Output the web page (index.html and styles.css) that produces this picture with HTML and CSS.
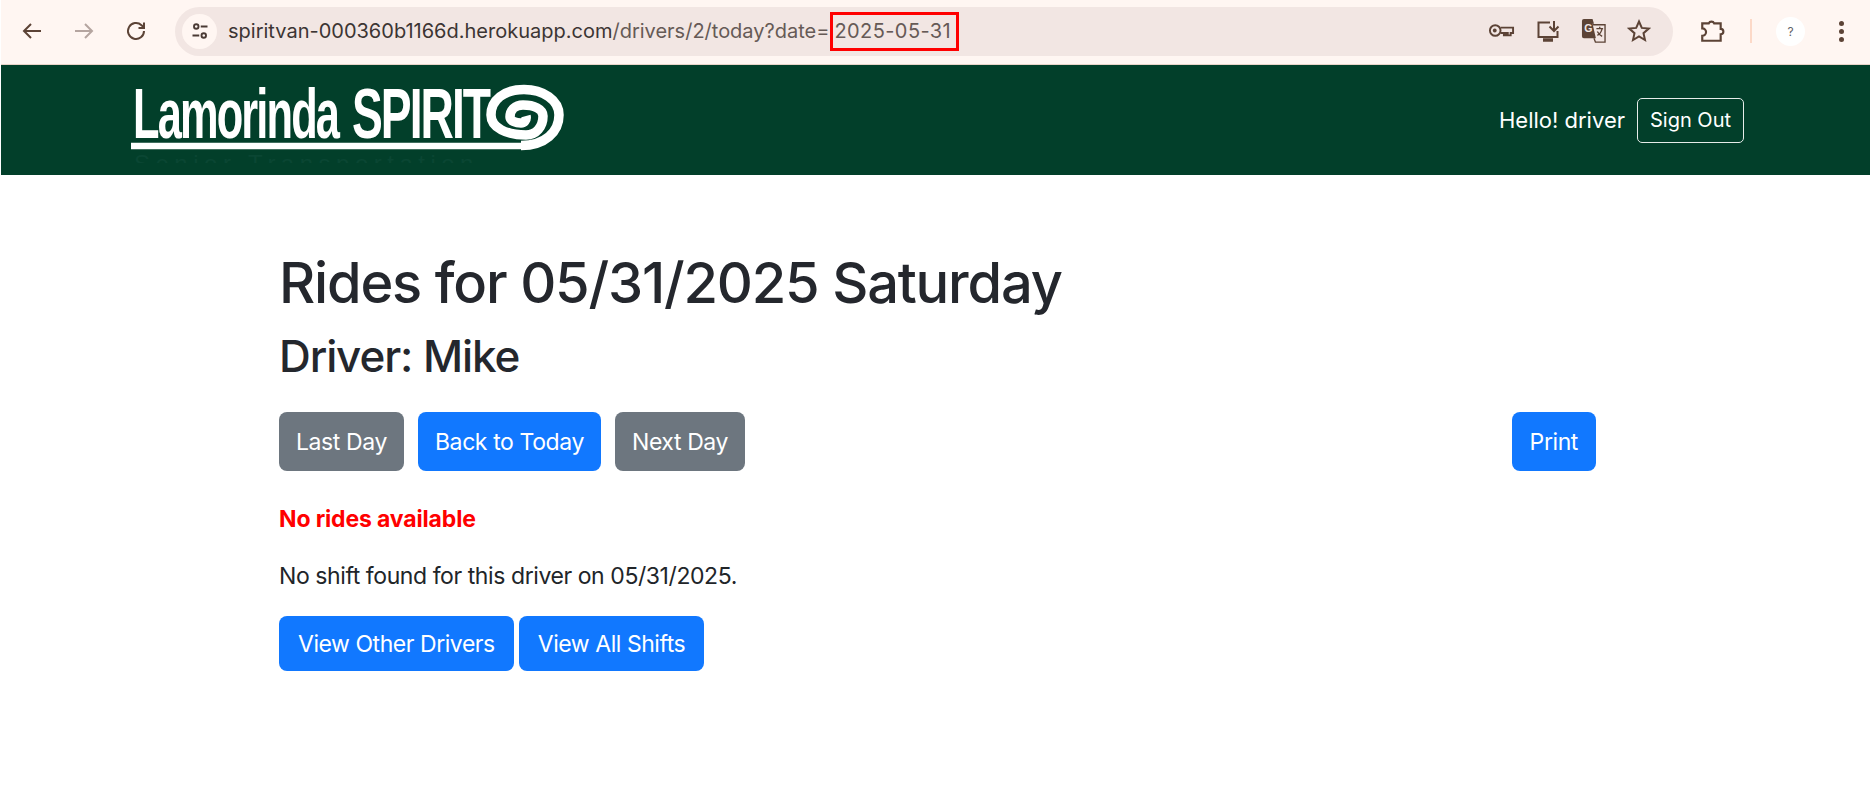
FILE: index.html
```html
<!DOCTYPE html>
<html lang="en">
<head>
    <meta charset="UTF-8">
    <meta name="viewport" content="width=device-width, initial-scale=1.0">
    <title>Rides for 05/31/2025</title>
    <link rel="stylesheet" href="styles.css">
</head>
<body>
    <div class="toolbar">
        <div class="nav-icons">
            <svg class="tool-icon" viewBox="0 0 24 24"><path d="M21 12H4M11 5 4 12l7 7"/></svg>
            <svg class="tool-icon faded" viewBox="0 0 24 24"><path d="M3 12h17M13 5l7 7-7 7"/></svg>
            <svg class="tool-icon" viewBox="0 0 24 24"><path d="M20 12a8 8 0 1 1-2.500-5.800L20 8.500M20 3.500v5.500h-5.500"/></svg>
        </div>
        <div class="omnibox">
            <div class="site-chip">
                <svg viewBox="0 0 24 24" class="chip-icon"><circle cx="7" cy="6" r="3"/><path d="M13 6h9M2 18h9"/><circle cx="17" cy="18" r="3"/></svg>
            </div>
            <div class="url">spiritvan-000360b1166d.herokuapp.com<span class="url-path">/drivers/2/today?date=</span><span class="url-mark">2025-05-31</span></div>
            <div class="omni-icons">
                <svg class="tool-icon key" viewBox="0 0 28 16"><path d="M13 4.500h13v5.500h-2.500v2.500h-3V10h-2v2.500h-2V10H13"/><circle cx="7.500" cy="7.500" r="5.500"/><circle class="solid" cx="7" cy="7.500" r="2"/></svg>
                <svg class="tool-icon" viewBox="0 0 24 24"><path d="M14 3.500H2.500V18h19v-6M18 2v10M13.500 7.500 18 12l4.500-4.500"/><path class="thick" d="M7 21h10"/></svg>
                <svg class="tool-icon translate" viewBox="0 0 26 26"><path class="solid" d="M1 2a2 2 0 0 1 2-2h9l1.500 5H12l3.500 15H3a2 2 0 0 1-2-2z"/><text class="icon-g" x="3.500" y="14">G</text><path class="thin" d="M12 6h13v18H15l-1.500-4"/><path class="thin" d="M16 10h7M19.500 8v2M22 10c-1 4-3 6-5 7M17 13c1 2 3 4 5 5"/></svg>
                <svg class="tool-icon" viewBox="0 0 24 24"><path d="m12 2.500 2.800 6.400 6.900.7-5.200 4.600 1.500 6.800-6-3.500-6 3.500 1.500-6.800-5.200-4.600 6.900-.7z"/></svg>
            </div>
        </div>
        <div class="toolbar-end">
            <svg class="tool-icon puzzle" viewBox="0 0 24 24"><path d="M3 5h6a2.700 2.700 0 0 1 5 0h6v5a2.500 2.500 0 0 1 0 5v6H3v-4.500a3.500 3.500 0 0 0 0-7z"/></svg>
            <div class="toolbar-sep"></div>
            <div class="avatar">?</div>
            <div class="dots"><span></span><span></span><span></span></div>
        </div>
    </div>

    <header class="site-header">
        <svg class="logo" viewBox="0 0 440 83">
            <text class="logo-text" transform="translate(2 58) scale(.62 1)">Lamorinda</text>
            <text class="logo-text" transform="translate(221 58) scale(.66 1)">SPIRIT</text>
            <path class="logo-bar" d="M0 66H392"/>
            <path class="logo-swirl" d="M390 65.500C414 65.500 428 52 428 35C428 20 412 9.500 393 9.500C373 9.500 360 20 360 35C360 48 376 55 395 55C405 55 412 47 412 36C412 29 403 25 392 25C384 25 379 30 379 37C379 41 385 43 390 43C393 43 396 40 395 36"/>
            <text class="logo-tagline" x="3" y="92">Senior Transportation</text>
        </svg>
        <div class="user-area">
            <span class="hello">Hello! driver</span>
            <a class="btn-outline" href="#">Sign Out</a>
        </div>
    </header>

    <main class="content">
        <h1>Rides for 05/31/2025 Saturday</h1>
        <h2>Driver: Mike</h2>
        <div class="day-nav">
            <a class="btn btn-gray" href="#">Last Day</a>
            <a class="btn btn-blue" href="#">Back to Today</a>
            <a class="btn btn-gray" href="#">Next Day</a>
            <a class="btn btn-blue btn-print" href="#">Print</a>
        </div>
        <p class="no-rides">No rides available</p>
        <p class="no-shift">No shift found for this driver on 05/31/2025.</p>
        <div class="shift-links">
            <a class="btn btn-blue btn-low" href="#">View Other Drivers</a>
            <a class="btn btn-blue btn-low" href="#">View All Shifts</a>
        </div>
    </main>
</body>
</html>
```

FILE: styles.css
```css
* {
    margin: 0;
    padding: 0;
    box-sizing: border-box;
}
body {
    background-color: #fff;
    font-family: Inter, "Liberation Sans", sans-serif;
    color: #212529;
    height: 796px;
    overflow: hidden;
}
a {
    text-decoration: none;
}

/* browser bar */
.toolbar {
    height: 65px;
    margin-left: 1px;
    background-color: #fff6f2;
    border-bottom: 1px solid #e8d3c8;
    display: flex;
    align-items: center;
    padding: 0 0 2px 19px;
}
.nav-icons {
    display: flex;
    gap: 28px;
    width: 155px;
}
.tool-icon {
    width: 24px;
    height: 24px;
    fill: none;
    stroke: #5c4336;
    stroke-width: 2;
    flex: none;
}
.tool-icon.faded {
    stroke: #b5a5a0;
}
.tool-icon .solid {
    fill: #5c4336;
    stroke: none;
}
.tool-icon .thick {
    stroke-width: 3.500;
}
.tool-icon .thin {
    stroke-width: 1.400;
}
.tool-icon.key {
    width: 27px;
    height: 16px;
}
.tool-icon.translate {
    width: 25px;
    height: 25px;
}
.icon-g {
    font-family: "Liberation Sans", sans-serif;
    font-size: 11px;
    font-weight: 700;
    fill: #f2e6e3;
    stroke: none;
}
.omnibox {
    width: 1498px;
    height: 49px;
    background-color: #f2e6e3;
    border-radius: 25px;
    display: flex;
    align-items: center;
    padding-left: 7px;
}
.site-chip {
    width: 35px;
    height: 35px;
    border-radius: 50%;
    background-color: #fff6f2;
    display: flex;
    align-items: center;
    justify-content: center;
}
.chip-icon {
    width: 18px;
    height: 18px;
    fill: none;
    stroke: #4a3a34;
    stroke-width: 2.500;
}
.url {
    margin-left: 11px;
    font-size: 20px;
    color: #3c3533;
    white-space: nowrap;
    display: flex;
    align-items: center;
}
.url-path {
    color: #665a56;
}
.url-mark {
    color: #665a56;
    border: 3px solid #f00;
    height: 39px;
    width: 129px;
    line-height: 33px;
    padding-left: 2px;
    letter-spacing: .4px;
}
.omni-icons {
    margin-left: auto;
    margin-right: 22px;
    display: flex;
    gap: 21px;
    align-items: center;
}
.toolbar-end {
    display: flex;
    align-items: center;
    margin-left: 26px;
}
.puzzle {
    width: 26px;
    height: 26px;
}
.toolbar-sep {
    width: 2px;
    height: 24px;
    background-color: #fcd9c8;
    margin-left: 25px;
}
.avatar {
    width: 29px;
    height: 29px;
    border-radius: 50%;
    background-color: #fff;
    color: #5f6368;
    font-size: 12px;
    line-height: 29px;
    text-align: center;
    margin-left: 24px;
}
.dots {
    display: flex;
    flex-direction: column;
    gap: 3px;
    margin-left: 34px;
}
.dots span {
    width: 5px;
    height: 5px;
    border-radius: 50%;
    background-color: #5c4336;
}

/* site header */
.site-header {
    height: 110px;
    margin-left: 1px;
    background-color: #023f2a;
    display: flex;
    align-items: center;
    justify-content: space-between;
    padding: 0 126px 0 130px;
}
.logo {
    width: 440px;
    height: 83px;
    margin-top: 3px;
}
.logo-text {
    font-family: "Liberation Sans", sans-serif;
    font-size: 70px;
    font-weight: 700;
    letter-spacing: -3px;
    fill: #fff;
}
.logo-bar {
    fill: none;
    stroke: #fff;
    stroke-width: 6.500;
}
.logo-swirl {
    fill: none;
    stroke: #fff;
    stroke-width: 9.500;
}
.logo-tagline {
    font-family: "Liberation Sans", sans-serif;
    font-size: 24px;
    letter-spacing: 5.500px;
    fill: #0a4633;
}
.user-area {
    display: flex;
    align-items: center;
    gap: 12px;
}
.hello {
    color: #fff;
    font-size: 22px;
}
.btn-outline {
    color: #fff;
    font-size: 20px;
    border: 1px solid #e6ece9;
    border-radius: 5px;
    height: 45px;
    width: 107px;
    display: flex;
    align-items: center;
    justify-content: center;
}

/* page content */
.content {
    width: 1317px;
    margin-left: 279px;
    padding-top: 75px;
}
h1 {
    font-size: 56px;
    font-weight: 500;
    line-height: 67px;
    letter-spacing: -1.2px;
    color: #24272d;
}
h2 {
    font-size: 44px;
    font-weight: 500;
    line-height: 53px;
    margin-top: 13px;
    letter-spacing: -1.1px;
    color: #24272d;
}
.day-nav {
    display: flex;
    gap: 14px;
    margin-top: 29px;
}
.btn {
    height: 59px;
    padding: 0 17px;
    border-radius: 8px;
    color: #fff;
    font-size: 23px;
    letter-spacing: -.4px;
    display: flex;
    align-items: center;
}
.btn-gray {
    background-color: #6d767f;
}
.btn-blue {
    background-color: #1178ff;
}
.btn-print {
    margin-left: auto;
    padding: 0 18px;
}
.btn-low {
    height: 55px;
    padding: 0 19px;
    letter-spacing: -.45px;
}
.no-rides {
    color: #f00;
    font-size: 23px;
    font-weight: 700;
    line-height: 34px;
    margin-top: 31px;
    letter-spacing: -.15px;
}
.no-shift {
    font-size: 23px;
    line-height: 34px;
    margin-top: 23px;
    letter-spacing: -.42px;
}
.shift-links {
    display: flex;
    gap: 5px;
    margin-top: 23px;
}
```
